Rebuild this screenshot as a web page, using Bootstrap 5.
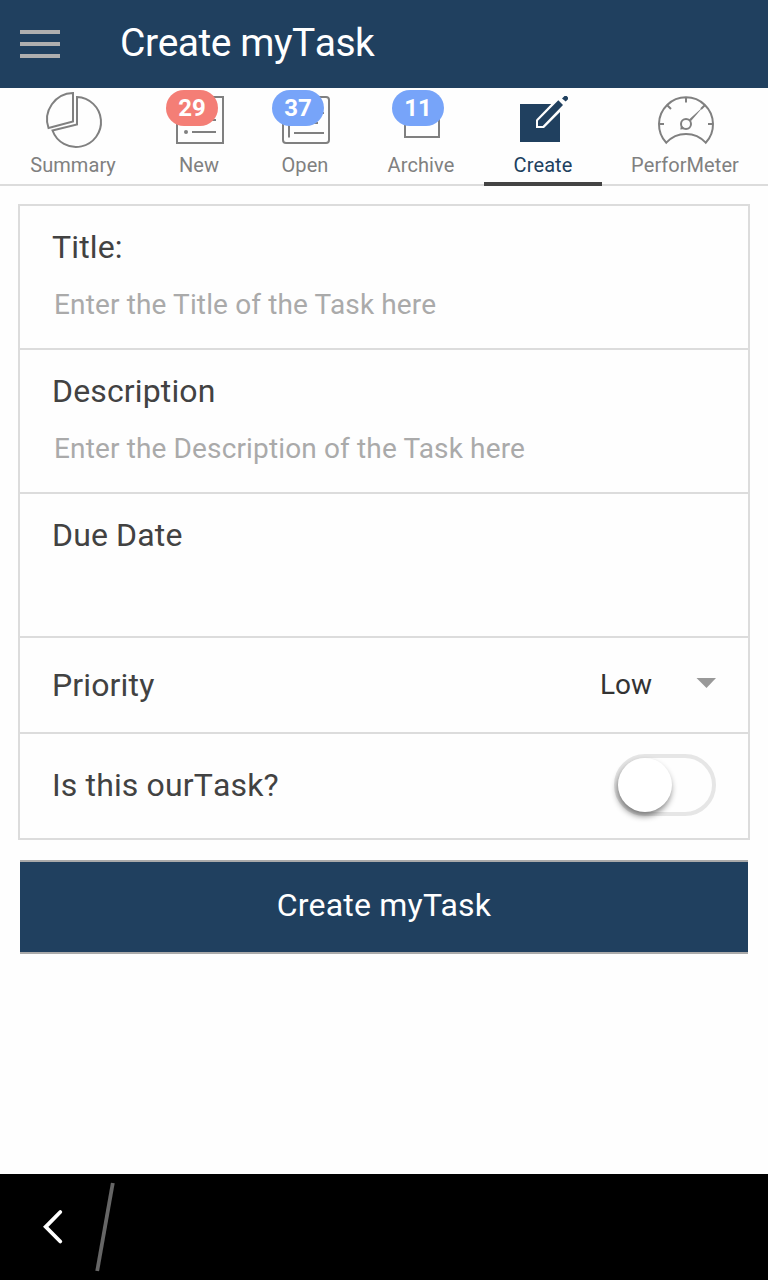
<!DOCTYPE html>
<html lang="en">
<head>
<meta charset="utf-8">
<meta name="viewport" content="width=device-width, initial-scale=1">
<title>Create myTask</title>
<link href="https://cdn.jsdelivr.net/npm/bootstrap@5.3.0/dist/css/bootstrap.min.css" rel="stylesheet">
<style>
:root { --navy: #20405f; --line: #dcdcdc; }
body { font-family: Roboto, "Liberation Sans", sans-serif; color: #424242; background: #fefefe; font-kerning: none; }
.app-bar { height: 88px; background: var(--navy); padding: 0 20px; }
.app-bar h1 { font-size: 39px; font-weight: 400; line-height: 48px; letter-spacing: -.48px; padding-bottom: 3px; margin-left: 60px; }
.burger { background: none; width: 40px; height: 28px; }
.burger span { height: 4px; background: #afafaf; }
.tab-bar { height: 98px; border-bottom: 2px solid var(--line); display: grid; grid-template-columns: 146px 106px 106px 126px 118px 166px; }
.tab-item { color: #808080; font-size: 20px; line-height: 26px; height: 98px; text-decoration: none; letter-spacing: .06px; }
.tab-item svg { width: 64px; height: 64px; margin-left: 2px; fill: none; stroke: #808080; stroke-width: 2; }
.tab-item.active { color: var(--navy); border-bottom: 4px solid #444; }
.tab-item .badge { top: 2px; left: 50%; margin-left: -33px; width: 52px; height: 36px; line-height: 36px; font-size: 24px; padding: 0; background: #77a4f9; }
.tab-item .badge.hot { background: #f47e76; }
.tab-item .badge.shifted { margin-left: -29px; }
.task-form { margin: 18px 18px 20px; --bs-list-group-border-width: 2px; --bs-list-group-border-color: var(--line); --bs-list-group-bg: #fefefe; }
.task-form .list-group-item { padding: 0 32px; border: 2px solid var(--line); border-top-width: 0; height: 144px; color: #424242; }
.task-form .list-group-item:first-child { border-top-width: 2px; height: 146px; }
.task-form .list-group-item.short { height: 96px; }
.task-form .list-group-item.switch-row { height: 106px; padding-bottom: 2px; }
.field-name { font-size: 32px; line-height: 40px; letter-spacing: .14px; }
.stacked .field-name { display: block; margin-top: 21px; }
.field-input { font-size: 28px; line-height: 36px; padding: 0 2px; margin-top: 20px; letter-spacing: .14px; background: transparent; color: #424242; }
.field-input::placeholder { color: #aaa; opacity: 1; }
.choice { font-size: 28px; line-height: 36px; color: #333; gap: 44px; }
.caret { width: 20px; height: 10px; margin-bottom: 4px; }
.toggle { width: 102px; height: 62px; border: 4px solid #e6e6e6; }
.knob { width: 54px; height: 54px; box-shadow: -1px 4px 6px rgba(0,0,0,.48); }
.submit { margin: 0 20px; height: 94px; background: var(--navy); border: 0 solid #aaa; border-width: 2px 0; font-size: 32px; letter-spacing: .2px; color: #fff; padding: 0 0 4px; }
.action-bar { height: 106px; }
</style>
</head>
<body class="min-vh-100 d-flex flex-column">
<header class="app-bar d-flex align-items-center">
  <button class="burger border-0 p-0 d-flex flex-column justify-content-between" aria-label="Menu"><span class="w-100"></span><span class="w-100"></span><span class="w-100"></span></button>
  <h1 class="text-white mb-0">Create myTask</h1>
</header>
<nav class="tab-bar">
  <a class="tab-item d-flex flex-column align-items-center" href="#">
    <svg viewBox="0 0 64 64"><path d="M31 5V33.5L6.5 40A26.5 26.5 0 0 1 31 5Z"/><path d="M35 9V36.5L10.5 42.5A25 25 0 1 0 35 9Z"/></svg>
    <span>Summary</span></a>
  <a class="tab-item position-relative d-flex flex-column align-items-center" href="#">
    <svg viewBox="0 0 64 64"><path d="M9 9H55V55H9ZM24 20H48M24 32H48M24 44H48"/><circle cx="18" cy="44" r="2" fill="#808080" stroke="none"/></svg>
    <span class="badge hot rounded-pill position-absolute">29</span><span>New</span></a>
  <a class="tab-item position-relative d-flex flex-column align-items-center" href="#">
    <svg viewBox="0 0 64 64"><rect x="9" y="9" width="46" height="46" rx="3"/><path d="M15 14V49.5M20 45H50M20 35H44M20 25H50"/></svg>
    <span class="badge rounded-pill position-absolute">37</span><span>Open</span></a>
  <a class="tab-item position-relative d-flex flex-column align-items-center" href="#">
    <svg viewBox="0 0 64 64"><path d="M15 20V49H49V20Z"/></svg>
    <span class="badge shifted rounded-pill position-absolute">11</span><span>Archive</span></a>
  <a class="tab-item active d-flex flex-column align-items-center" href="#">
    <svg viewBox="0 0 64 64" style="stroke:none"><path fill="#20405f" d="M8 16H48V54H8Z"/><path fill="#fefefe" d="M24 31.7V40H32L56 16 47 8Z"/><path fill="#20405f" d="M26 32.7V38H30.7L51 17 46.3 12.3ZM50 10.5 52.5 8H54.7L56 9.5V11.3L53.7 13.5Z"/></svg>
    <span>Create</span></a>
  <a class="tab-item d-flex flex-column align-items-center" href="#">
    <svg viewBox="0 0 64 64"><path d="M12.3 54.7A27 27 0 1 1 51.7 54.7A26.6 26.6 0 0 0 12.3 54.7ZM32 9V14.5M5 36H10M54 36H59M13 17 17 21M51 17 47 21"/><circle cx="32" cy="36" r="5"/><path fill="#808080" stroke="none" d="M35 31.5 50 18 36.8 33.3ZM26.3 41.5 27 37 31 41Z"/></svg>
    <span>PerforMeter</span></a>
</nav>
<main>
  <form>
    <div class="task-form list-group rounded-0">
      <label class="list-group-item stacked rounded-0"><span class="field-name">Title:</span><input class="field-input border-0 w-100" placeholder="Enter the Title of the Task here"></label>
      <label class="list-group-item stacked"><span class="field-name">Description</span><input class="field-input border-0 w-100" placeholder="Enter the Description of the Task here"></label>
      <label class="list-group-item stacked"><span class="field-name">Due Date</span></label>
      <div class="list-group-item short d-flex align-items-center justify-content-between">
        <span class="field-name">Priority</span>
        <span class="choice d-flex align-items-center">Low<svg class="caret" viewBox="0 0 20 10"><path fill="#999" d="M0.5 0H20L10.5 10Z"/></svg></span>
      </div>
      <div class="list-group-item switch-row rounded-0 d-flex align-items-center justify-content-between">
        <span class="field-name">Is this ourTask?</span>
        <span class="toggle rounded-pill" role="switch" aria-checked="false"><span class="knob d-block bg-white rounded-circle"></span></span>
      </div>
    </div>
    <div class="d-grid"><button type="button" class="submit btn rounded-0">Create myTask</button></div>
  </form>
</main>
<footer class="action-bar bg-black mt-auto">
  <svg width="130" height="106" viewBox="0 0 130 106" fill="none"><path d="M60.3 38 45.7 52.8 60.3 67.5" stroke="#fff" stroke-width="3.8" stroke-linecap="round"/><path d="M112.8 9 97.2 97" stroke="#666" stroke-width="3.8"/></svg>
</footer>
<script src="https://cdn.jsdelivr.net/npm/bootstrap@5.3.0/dist/js/bootstrap.bundle.min.js"></script>
</body>
</html>
